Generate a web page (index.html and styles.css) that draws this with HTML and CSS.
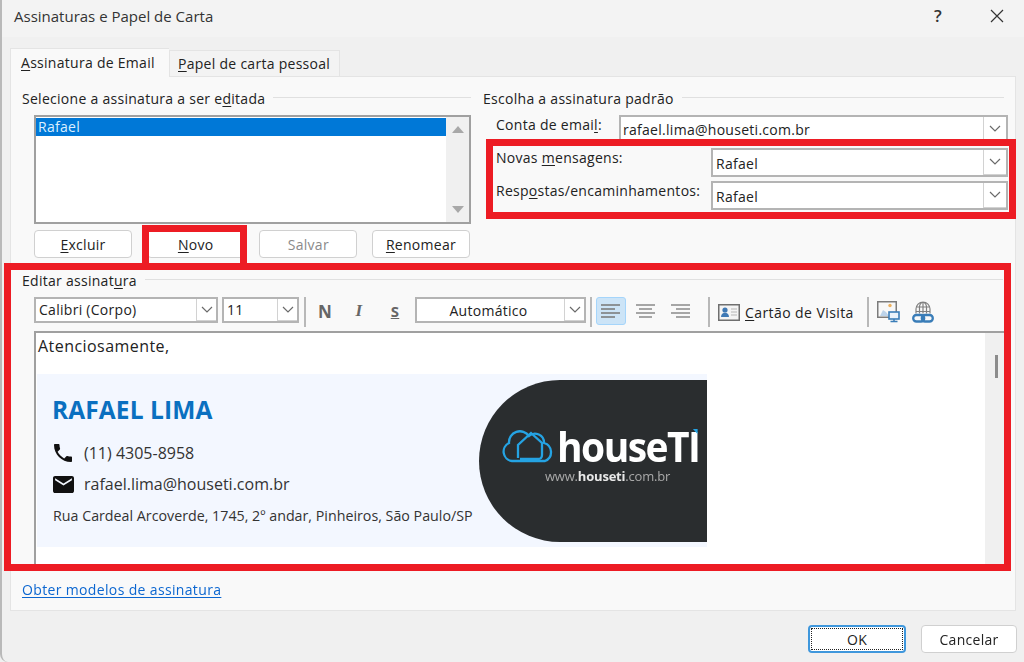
FILE: index.html
```html
<!DOCTYPE html>
<html lang="pt-BR">
<head>
<meta charset="utf-8">
<title>Assinaturas e Papel de Carta</title>
<link rel="stylesheet" href="styles.css">
</head>
<body>
<svg class="defs" width="0" height="0">
  <symbol id="chev" viewBox="0 0 12 8"><path d="M1 1l5 5 5-5" fill="none" stroke="#6a6a6a" stroke-width="1.2"/></symbol>
</svg>
<div class="dialog">
  <header class="titlebar">
    <span class="title">Assinaturas e Papel de Carta</span>
    <span class="help">?</span>
    <svg class="close" width="14" height="14" viewBox="0 0 14 14"><path d="M1 1l12 12M13 1L1 13" stroke="#333" stroke-width="1.2" fill="none"/></svg>
  </header>
  <div class="tabs">
    <div class="tab tab-active"><u>A</u>ssinatura de Email</div>
    <div class="tab"><u>P</u>apel de carta pessoal</div>
  </div>
  <main class="panel">
    <div class="top">
      <section class="col-left">
        <div class="legend"><span>Selecione a assinatura a ser e<u>d</u>itada</span><i></i></div>
        <div class="listbox">
          <div class="list-items"><div class="list-sel">Rafael</div></div>
          <div class="list-scroll"><b class="arrow-up"></b><b class="arrow-down"></b></div>
        </div>
        <div class="btn-row">
          <div class="btn"><span><u>E</u>xcluir</span></div>
          <div class="btn"><span><u>N</u>ovo</span></div>
          <div class="btn btn-off"><span>Salvar</span></div>
          <div class="btn"><span><u>R</u>enomear</span></div>
        </div>
      </section>
      <section class="col-right">
        <div class="legend"><span>Escolha a assinatura padrão</span><i></i></div>
        <div class="rows">
          <div class="row"><label>Conta de emai<u>l</u>:</label><div class="combo combo-account"><span>rafael.lima@houseti.com.br</span><em><svg width="12" height="8"><use href="#chev"/></svg></em></div></div>
          <div class="row"><label>Novas <u>m</u>ensagens:</label><div class="combo combo-sig"><span>Rafael</span><em><svg width="12" height="8"><use href="#chev"/></svg></em></div></div>
          <div class="row"><label>Resp<u>o</u>stas/encaminhamentos:</label><div class="combo combo-sig"><span>Rafael</span><em><svg width="12" height="8"><use href="#chev"/></svg></em></div></div>
        </div>
      </section>
    </div>
    <section class="edit">
      <div class="legend"><span>Editar assinat<u>u</u>ra</span><i></i></div>
      <div class="toolbar">
        <div class="combo combo-font"><span>Calibri (Corpo)</span><em><svg width="12" height="8"><use href="#chev"/></svg></em></div>
        <div class="combo combo-size"><span>11</span><em><svg width="12" height="8"><use href="#chev"/></svg></em></div>
        <s class="sep sep-a"></s>
        <span class="fmt fmt-n">N</span>
        <span class="fmt fmt-i">I</span>
        <span class="fmt fmt-s">S</span>
        <div class="combo combo-color"><span>Automático</span><em><svg width="12" height="8"><use href="#chev"/></svg></em></div>
        <s class="sep sep-b"></s>
        <span class="align align-on"><svg width="20" height="16" viewBox="0 0 20 16"><path d="M0 2h19M0 6h14M0 10h19M0 14h14" stroke="#777" stroke-width="1.6"/></svg></span>
        <span class="align"><svg width="20" height="16" viewBox="0 0 20 16"><path d="M0 2h19M3 6h13M0 10h19M3 14h13" stroke="#8a8a8a" stroke-width="1.6"/></svg></span>
        <span class="align"><svg width="20" height="16" viewBox="0 0 20 16"><path d="M0 2h19M5 6h14M0 10h19M5 14h14" stroke="#8a8a8a" stroke-width="1.6"/></svg></span>
        <s class="sep sep-c"></s>
        <svg class="card-icon" width="22" height="17" viewBox="0 0 22 17"><rect x=".75" y=".75" width="20.5" height="15.5" fill="#f4f4f4" stroke="#6f6f6f" stroke-width="1.5"/><circle cx="7" cy="6" r="2.6" fill="#3f79b5"/><path d="M3 13c0-3 2-4.2 4-4.2s4 1.2 4 4.2z" fill="#3f79b5"/><path d="M13 5h6M13 8h6M13 11h6" stroke="#b5b5b5" stroke-width="1.2"/></svg>
        <span class="card-label"><u>C</u>artão de Visita</span>
        <s class="sep sep-d"></s>
        <svg class="pic-icon" width="23" height="22" viewBox="0 0 23 22"><path d="M.75.75h18.5v15.5H.75z" fill="#f8f8f8" stroke="#7c7c7c" stroke-width="1.5"/><path d="M3 15l3-6 3 2 3 4z" fill="#bcd3ea"/><circle cx="13" cy="4.5" r="1.7" fill="#eeb25f"/><rect x="12" y="11" width="10" height="7" fill="#eaf3fb" stroke="#3a7db8" stroke-width="1.6"/><path d="M17 18v2M13.5 20.5h7" stroke="#3a7db8" stroke-width="1.5"/></svg>
        <svg class="link-icon" width="22" height="22" viewBox="0 0 22 22"><path d="M4 12.500V8A7 7 0 0 1 18 8v4.500M11 1v11.500M7.500 12.500V6c0-2 1-4 3.500-5 2.500 1 3.500 3 3.500 5v6.500M4 6h14M4 10.500h14" fill="none" stroke="#808080" stroke-width="1.200"/><rect x="1.200" y="14" width="11" height="6.500" rx="3.200" fill="none" stroke="#3a7db8" stroke-width="2.300"/><rect x="9.800" y="14" width="11" height="6.500" rx="3.200" fill="none" stroke="#3a7db8" stroke-width="2.300"/></svg>
      </div>
      <div class="editor">
        <div class="editor-body">
          <p class="greeting">Atenciosamente,</p>
          <div class="sig">
            <div class="sig-info">
              <h1>RAFAEL LIMA</h1>
              <div class="sig-line sig-phone"><svg width="18" height="18" viewBox="3 3 18 18"><path d="M6.62 10.79c1.44 2.83 3.76 5.14 6.59 6.59l2.2-2.2c.27-.27.67-.36 1.02-.24 1.12.37 2.33.57 3.57.57.55 0 1 .45 1 1V20c0 .55-.45 1-1 1-9.39 0-17-7.61-17-17 0-.55.45-1 1-1h3.5c.55 0 1 .45 1 1 0 1.25.2 2.45.57 3.57.11.35.03.74-.25 1.02l-2.2 2.2z" fill="#111"/></svg><span>(11) 4305-8958</span></div>
              <div class="sig-line sig-mail"><svg width="21" height="17" viewBox="2 4 20 16" preserveAspectRatio="none"><path d="M20 4H4c-1.1 0-2 .9-2 2v12c0 1.1.9 2 2 2h16c1.1 0 2-.9 2-2V6c0-1.1-.9-2-2-2zm0 4l-8 5-8-5V6l8 5 8-5v2z" fill="#111"/></svg><span>rafael.lima@houseti.com.br</span></div>
              <div class="sig-addr">Rua Cardeal Arcoverde, 1745, 2º andar, Pinheiros, São Paulo/SP</div>
            </div>
            <div class="sig-logo">
              <div class="brand">
                <svg width="58" height="38" viewBox="0 0 56 36"><path d="M12 33A9.500 9.500 0 0 1 9 15 11 11 0 0 1 29 8 9 9 0 0 1 44 15 9.500 9.500 0 0 1 45 33z" fill="none" stroke="#25a3e3" stroke-width="2.300"/><path d="M18 30V17L31 5l11 10v12q0 4-4 4H20" fill="none" stroke="#25a3e3" stroke-width="2.300"/></svg>
                <span class="brand-name">houseTI<b></b></span>
              </div>
              <div class="brand-url">www.<b>houseti</b>.com.br</div>
            </div>
          </div>
        </div>
        <div class="editor-scroll"><b></b></div>
      </div>
    </section>
    <a class="link" href="#">Obter modelos de assinatura</a>
  </main>
  <footer class="footer">
    <div class="btn btn-ok"><span>OK</span></div>
    <div class="btn btn-cancel"><span>Cancelar</span></div>
  </footer>
  <div class="mark mark-combos"></div>
  <div class="mark mark-new"></div>
  <div class="mark mark-edit"></div>
</div>
</body>
</html>
```
FILE: styles.css
```css
* { box-sizing: border-box; }
html, body { margin: 0; padding: 0; }
body { width: 1024px; height: 662px; overflow: hidden; background: #f0f0f0; font-family: "Open Sans", "Noto Sans", sans-serif; font-size: 14px; letter-spacing: .28px; color: #222; }
.defs { position: absolute; }
u { text-underline-offset: 2px; text-decoration-thickness: 1px; }
.dialog { position: relative; width: 1024px; height: 662px; display: flex; flex-direction: column; border-left: 2px solid #b9b9b9; border-bottom-left-radius: 8px; filter: blur(0.4px); }

.titlebar { height: 37px; flex: none; background: #f3f3f3; display: flex; align-items: center; padding: 0 20px 6px 12px; }
.title { flex: 1; font-size: 15px; color: #333; letter-spacing: 0; }
.help { font-size: 17px; width: 12px; margin-right: 44px; color: #333; font-weight: 600; }

.tabs { height: 39px; flex: none; display: flex; align-items: flex-end; padding-left: 8px; }
.tab { height: 26px; width: 171px; background: #f3f3f3; border: 1px solid #e4e4e4; border-bottom: 0; padding: 3px 0 0 8px; }
.tab-active { height: 29px; width: 159px; background: #f9f9f9; padding: 4px 0 0 10px; border-right: 0; position: relative; top: 1px; }

.panel { flex: none; width: 1006px; height: 535px; margin-left: 8px; background: #f9f9f9; border: 1px solid #e4e4e4; padding: 12px 0 0 11px; display: flex; flex-direction: column; }
.top { display: flex; gap: 12px; height: 182px; flex: none; }
.col-left { width: 449px; flex: none; }
.col-right { width: 521px; flex: none; }

.legend { display: flex; align-items: center; gap: 8px; height: 18px; }
.legend span { white-space: nowrap; }
.legend i { flex: 1; height: 1px; background: #e0e0e0; margin-top: -2px; }

.listbox { margin: 8px 0 0 12px; height: 109px; width: 437px; border: 2px solid #a0a0a0; background: #fff; display: flex; }
.list-items { flex: 1; padding: 1px 0 0 0; }
.list-sel { height: 18px; background: #0078d7; color: #dcefff; line-height: 18px; padding-left: 2px; }
.list-scroll { width: 23px; background: #f0f0f0; display: flex; flex-direction: column; justify-content: space-between; align-items: center; padding: 9px 0; }
.arrow-up { width: 0; height: 0; border: 6px solid transparent; border-top: 0; border-bottom: 7px solid #a8a8a8; }
.arrow-down { width: 0; height: 0; border: 6px solid transparent; border-bottom: 0; border-top: 7px solid #a8a8a8; }

.btn-row { display: flex; justify-content: space-between; margin: 6px 0 0 12px; width: 436px; }
.btn { width: 98px; height: 28px; background: #fff; border: 1px solid #d0d0d0; border-radius: 4px; display: flex; align-items: center; justify-content: center; }
.btn-off { color: #8a8a8a; }

.rows { margin: 8px 0 0 13px; width: 512px; display: flex; flex-direction: column; gap: 4px; }
.row { display: flex; justify-content: space-between; height: 29px; }
.row label { line-height: 19px; }
.combo { height: 29px; background: #fff; border: 2px solid #b4b4b4; display: flex; align-items: center; padding-left: 2px; }
.combo span { flex: 1; white-space: nowrap; }
.combo em { flex: none; width: 23px; height: 100%; background: #fff; border-left: 1px solid #d2d2d2; border-bottom: 1px solid #d2d2d2; display: flex; align-items: center; justify-content: center; }
.combo-account { width: 389px; }
.combo-sig { width: 297px; padding-left: 3px; }
.combo-sig span { padding-top: 2px; }

.edit { flex: none; }
.edit .legend { width: 981px; }
.toolbar { display: flex; align-items: center; height: 30px; margin: 8px 0 0 12px; }
.toolbar .combo { height: 26px; margin-bottom: 4px; }
.toolbar .combo em { width: 20px; height: 22px; }
.combo-font { width: 184px; padding-left: 3px; }
.combo-font span, .combo-size span { padding-bottom: 2px; }
.toolbar .combo-size { width: 77px; margin-left: 4px; padding-left: 3px; }
.toolbar .combo-color { width: 171px; margin-left: 13px; }
.combo-color span { text-align: center; padding-right: 6px; }
.sep { flex: none; width: 2px; height: 30px; background: #b8b8b8; }
.sep-a { margin-left: 5px; }
.sep-b { margin-left: 4px; }
.sep-c { margin-left: 12px; }
.sep-d { margin-left: 13px; }
.fmt { width: 14px; text-align: center; font-weight: 700; font-size: 15px; color: #666; margin-bottom: 2px; }
.fmt-n { margin-left: 12px; font-size: 17px; }
.fmt-i { margin-left: 20px; font-size: 17px; font-style: italic; font-family: "Liberation Serif", serif; }
.fmt-s { margin-left: 22px; text-decoration: underline; }
.align { width: 30px; height: 28px; display: flex; align-items: center; justify-content: center; border: 1px solid transparent; border-radius: 3px; margin: 0 0 2px 5px; }
.align-on { background: #cce4f7; border-color: #a5d5fb; margin-left: 4px; }
.card-icon { margin-left: 8px; flex: none; }
.card-label { margin-left: 5px; white-space: nowrap; letter-spacing: .42px; }
.pic-icon { margin-left: 8px; flex: none; }
.link-icon { margin-left: 12px; flex: none; }

.editor { margin: 4px 0 0 12px; width: 970px; height: 239px; background: #fff; border-top: 2px solid #a0a0a0; border-left: 2px solid #a0a0a0; display: flex; }
.editor-body { flex: 1; padding-left: 1px; }
.greeting { margin: 0; height: 41px; padding: 3px 0 0 1px; font-size: 16px; line-height: 20px; letter-spacing: .45px; color: #222; }
.editor-scroll { width: 19px; background: #f0f0f0; padding: 22px 0 0 10px; }
.editor-scroll b { display: block; width: 3px; height: 23px; background: #8c8c8c; }

.sig { width: 670px; height: 173px; background: #f3f7ff; display: flex; }
.sig-info { width: 442px; flex: none; padding: 21px 0 0 16px; letter-spacing: 0; }
.sig-info h1 { margin: 0 0 0 -1px; font-size: 24.5px; line-height: 30px; font-weight: 700; color: #0a70c0; letter-spacing: .1px; }
.sig-line { display: flex; align-items: center; height: 22px; font-size: 16px; color: #333; }
.sig-line svg { flex: none; }
.sig-phone { margin-top: 17px; padding-left: 1px; }
.sig-phone span { margin-left: 12px; }
.sig-mail { margin-top: 9px; }
.sig-mail span { margin-left: 10px; }
.sig-addr { margin-top: 11px; font-size: 14.25px; color: #333; white-space: nowrap; letter-spacing: 0; }
.sig-logo { flex: none; width: 228px; height: 162px; margin-top: 6px; background: #2a2d2f; border-radius: 81px 0 0 81px; padding: 46px 0 0 21px; letter-spacing: 0; }
.brand { display: flex; align-items: center; height: 40px; gap: 1px; }
.brand-name { position: relative; font-size: 41px; line-height: 40px; font-weight: 700; color: #fff; letter-spacing: -1.6px; transform: scaleX(.95); transform-origin: left center; }
.brand-name b { position: absolute; right: 2px; top: 3px; width: 0; height: 0; border-top: 5px solid #25a3e3; border-left: 5px solid transparent; }
.brand-url { margin: 1px 0 0 45px; font-size: 13px; color: #a9a9a9; letter-spacing: -.2px; }
.brand-url b { color: #e8e8e8; }

.link { margin: 10px 0 0 0; color: #0b66d0; letter-spacing: .35px; text-underline-offset: 2px; }

.footer { flex: 1; display: flex; justify-content: flex-end; gap: 15px; padding: 14px 7px 0 0; }
.btn-ok { position: relative; border: 2px solid #3f97dc; }
.btn-ok::after { content: ""; position: absolute; inset: 1px; border: 1px dotted #222; }
.btn-cancel { width: 96px; }

.mark { position: absolute; border: 7px solid #ed1c24; pointer-events: none; }
.mark-combos { left: 484px; top: 139px; width: 530px; height: 80px; }
.mark-new { left: 140px; top: 225px; width: 105px; height: 39px; border-bottom: 0; }
.mark-edit { left: 2px; top: 263px; width: 1007px; height: 308px; }
```
